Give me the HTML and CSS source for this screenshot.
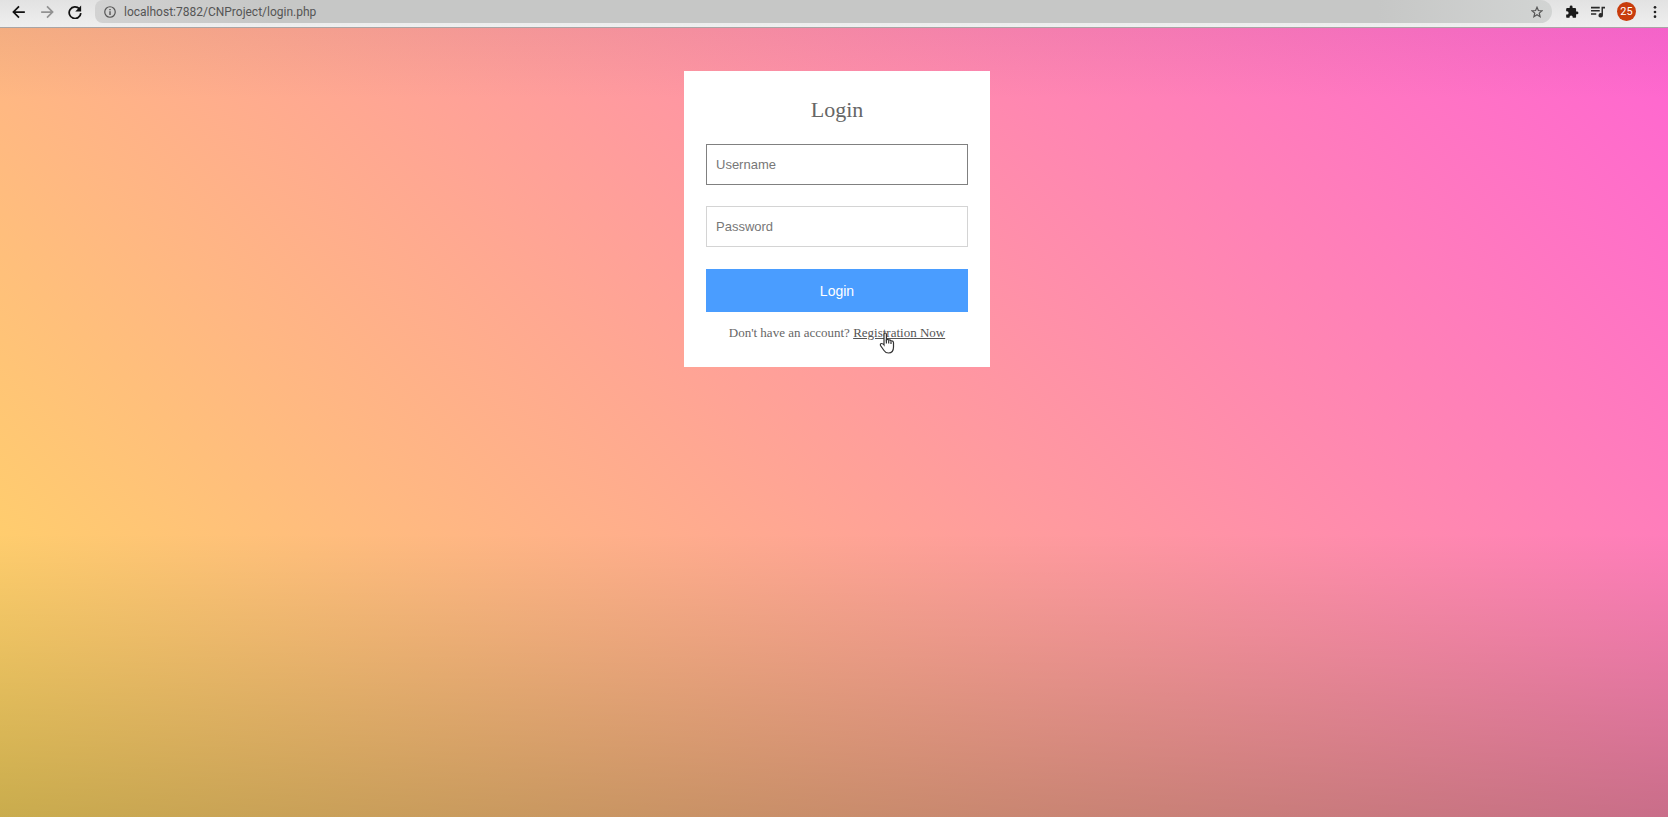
FILE: index.html
```html
<!DOCTYPE html>
<html lang="en">
<head>
<meta charset="utf-8">
<title>Login</title>
<link rel="stylesheet" href="styles.css">
</head>
<body>
<header class="toolbar">
  <nav class="nav">
    <button class="icon-btn" type="button" aria-label="Back">
      <svg class="icon" viewBox="0 0 24 24"><path d="M22 12H3M12 2.500L2.500 12L12 21.500" fill="none" stroke="#111" stroke-width="3"/></svg>
    </button>
    <button class="icon-btn" type="button" aria-label="Forward">
      <svg class="icon" viewBox="0 0 24 24"><path d="M2 12H21M12 2.500L21.500 12L12 21.500" fill="none" stroke="#929292" stroke-width="3"/></svg>
    </button>
    <button class="icon-btn" type="button" aria-label="Reload">
      <svg class="icon" viewBox="0 0 24 24"><path d="M19.500 6.500A10 10 0 1 0 22 14" fill="none" stroke="#111" stroke-width="3"/><path d="M22.500 1V11H12.500Z" fill="#111"/></svg>
    </button>
  </nav>
  <div class="omnibox">
    <svg class="icon icon-small" viewBox="0 0 24 24"><circle cx="12" cy="12" r="10.500" fill="none" stroke="#555" stroke-width="2.400"/><path d="M12 10.500V18M12 6V8.500" stroke="#555" stroke-width="2.800"/></svg>
    <input class="url" type="text" aria-label="Address" value="localhost:7882/CNProject/login.php">
    <button class="icon-btn" type="button" aria-label="Bookmark this page">
      <svg class="icon icon-small" viewBox="0 0 24 24"><path d="M12 2.500L14.800 9L22 9.600L16.500 14.300L18.200 21.400L12 17.600L5.800 21.400L7.500 14.300L2 9.600L9.200 9Z" fill="none" stroke="#555" stroke-width="2.400"/></svg>
    </button>
  </div>
  <div class="actions">
    <button class="icon-btn" type="button" aria-label="Extensions">
      <svg class="icon" viewBox="0 0 24 24"><path d="M20.500 11H19V7a2 2 0 0 0-2-2h-4V3.500a2.500 2.500 0 0 0-5 0V5H4a2 2 0 0 0-2 2v3.800h1.500a2.700 2.700 0 0 1 0 5.400H2V20a2 2 0 0 0 2 2h3.800v-1.500a2.700 2.700 0 0 1 5.400 0V22H17a2 2 0 0 0 2-2v-4h1.500a2.500 2.500 0 0 0 0-5z" fill="#1a1a1a"/></svg>
    </button>
    <button class="icon-btn" type="button" aria-label="Media controls">
      <svg class="icon" viewBox="0 0 24 24"><path d="M0 4.500H15M0 10H15M0 15.500H9" stroke="#2a2a2a" stroke-width="2.600"/><path d="M24 3H18V14.200a3.800 3.800 0 1 0 2.500 3.500V6H24Z" fill="#2a2a2a"/></svg>
    </button>
    <button class="avatar" type="button" aria-label="Profile 25">25</button>
    <button class="icon-btn" type="button" aria-label="Menu">
      <svg class="icon" viewBox="0 0 24 24"><g fill="#222"><circle cx="12" cy="4" r="2.300"/><circle cx="12" cy="12" r="2.300"/><circle cx="12" cy="20" r="2.300"/></g></svg>
    </button>
  </div>
</header>
<main class="page">
  <form class="card">
    <h1 class="title">Login</h1>
    <input class="field field-active" type="text" name="username" placeholder="Username" aria-label="Username">
    <input class="field" type="password" name="password" placeholder="Password" aria-label="Password">
    <button class="submit" type="button">Login</button>
    <p class="register">Don't have an account? <a class="register-link" href="#">Registration Now<svg class="pointer" viewBox="0 0 16 22" aria-hidden="true"><path d="M5 13V2.500Q5 1 6.200 1T7.400 2.500V8Q8.500 6.800 9.700 8.200Q11 7.500 12 9Q14.500 8.500 14.500 11V15Q14.500 21 9.500 21Q6.500 21 5 18.500L1.500 13.500Q1 11.500 2.500 11.500Q3.800 11.500 5 13Z" fill="#fff" stroke="#333" stroke-width="1.200"/><path d="M7.400 7.500V11.500M9.700 8.500V11.500M12 9.500V12" stroke="#333" stroke-width="1.200"/></svg></a></p>
  </form>
</main>
</body>
</html>
```
FILE: styles.css
```css
* {
  box-sizing: border-box;
}

body {
  margin: 0;
  min-height: 100vh;
  display: flex;
  flex-direction: column;
  font-family: "Liberation Serif", "Times New Roman", serif;
}

button {
  padding: 0;
  border: 0;
  background: none;
}

.toolbar {
  display: flex;
  align-items: flex-start;
  height: 28px;
  background: linear-gradient(#e2e2e2, #efefef);
  border-bottom: 1px solid #a9a5a5;
}

.nav {
  display: flex;
  align-items: center;
  gap: 14px;
  height: 23px;
  padding: 0 13px 0 12px;
}

.icon-btn {
  display: flex;
}

.icon {
  display: block;
  flex: none;
  width: 14px;
  height: 14px;
}

.icon-small {
  width: 12px;
  height: 12px;
}

.omnibox {
  flex: 1;
  display: flex;
  align-items: center;
  gap: 8px;
  height: 23px;
  padding: 0 9px;
  border-radius: 8px 12px 12px 8px;
  background: linear-gradient(90deg, #d2d2d2, #c6c7c6 12%, #c6c7c6 88%, #d2d4d3);
}

.url {
  flex: 1;
  padding: 0;
  border: 0;
  background: none;
  color: #555;
  font-family: Roboto, sans-serif;
  font-size: 12px;
  outline: none;
}

.actions {
  display: flex;
  align-items: center;
  gap: 12px;
  height: 23px;
  padding: 0 6px 0 13px;
}

.avatar {
  width: 19px;
  height: 19px;
  border-radius: 50%;
  background: #c83c0c;
  color: #fff;
  font: 11px Roboto, sans-serif;
}

.page {
  flex: 1;
  padding: 43px 16px 43px 22px;
  background:
    linear-gradient(rgba(60, 60, 60, 0.06), rgba(60, 60, 60, 0) 9%),
    linear-gradient(rgba(0, 0, 0, 0) 64%, rgba(0, 0, 0, 0.21)),
    linear-gradient(45deg, #ffda61, #ff65d2);
}

.card {
  display: flex;
  flex-direction: column;
  width: 306px;
  margin: 0 auto;
  padding: 22px 22px 26px;
  background: #fff;
}

.title {
  margin: 0 0 18px;
  color: #666;
  font-size: 22px;
  font-weight: 400;
  line-height: 33px;
  text-align: center;
}

.field {
  height: 41px;
  margin-bottom: 22px;
  padding: 0 9px;
  border: 1px solid #d4d4d4;
  border-radius: 0;
  background: #fff;
  font-family: "Liberation Sans", Arial, sans-serif;
  font-size: 13px;
  outline: none;
}

.field::placeholder {
  color: #777;
}

.field-active {
  margin-bottom: 21px;
  border-color: #808080;
}

.submit {
  height: 43px;
  background: #4a9dff;
  color: #fff;
  font-family: "Liberation Sans", Arial, sans-serif;
  font-size: 14px;
}

.register {
  margin: 13px 0 0;
  color: #666;
  font-size: 13px;
  line-height: 16px;
  text-align: center;
}

.register-link {
  position: relative;
  color: #555;
}

.pointer {
  position: absolute;
  top: 7px;
  left: 26px;
  width: 16px;
  height: 22px;
}
```
